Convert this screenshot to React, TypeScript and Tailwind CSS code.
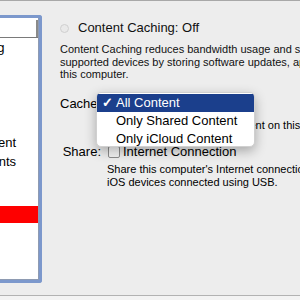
import React from "react";

const rows = [
  "DVD or CD Sharing",
  "Screen Sharing",
  "File Sharing",
  "Printer Sharing",
  "Remote Login",
  "Remote Management",
  "Remote Apple Events",
  "Internet Sharing",
];

export default function App() {
  return (
    <div
      className="relative w-[300px] h-[300px] overflow-hidden bg-[#ededed] text-black"
      style={{ fontFamily: '"Liberation Sans", Arial, sans-serif' }}
    >
      <div className="h-px bg-[#a8a8a8]" />
      <div className="flex h-[294px]">
        {/* Service list */}
        <div className="pt-[14px] shrink-0">
          <div className="w-[42px] h-[268px] border-[3px] border-l-0 border-[#7c98cc] rounded-r-[3px]">
            <div className="h-full border-r border-b border-[#8e9bb2] bg-white overflow-hidden flex flex-col">
              <div className="h-[20px] shrink-0 border-b border-[#7a7a7a] flex justify-end pt-[2px]">
                <div className="w-[2px] h-[17px] bg-[#8a8a8a]" />
              </div>
              {rows.map((r) => (
                <div
                  key={r}
                  className="h-[19px] shrink-0 flex items-center text-[13px] leading-[16px] whitespace-nowrap"
                >
                  <span className="ml-[-109px]">{r}</span>
                </div>
              ))}
              <div className="h-[16px] shrink-0 flex items-center text-[13px] leading-[16px] whitespace-nowrap">
                <span className="ml-[-109px]">Bluetooth Sharing</span>
              </div>
              <div className="h-[17px] shrink-0 bg-[#fe0000]" />
            </div>
          </div>
        </div>

        {/* Detail pane */}
        <div className="ml-[18px] pt-[19px] flex flex-col min-w-0 shrink-0 w-[300px]">
          <div className="h-[16px] flex items-center">
            <div className="w-[9px] h-[9px] rounded-full border border-[#cfcfcf] bg-[#e9e9e9]" />
            <span className="ml-[9px] text-[13px] leading-[16px] text-[#111]">
              Content Caching: Off
            </span>
          </div>
          <div className="mt-[7px] text-[11px] leading-[12.5px] whitespace-nowrap text-[#111]">
            Content Caching reduces bandwidth usage and speeds up installation on
            <br />
            supported devices by storing software updates, apps, and other content on
            <br />
            this computer.
          </div>
          <div className="mt-[13px] h-[20px] flex items-center">
            <span className="w-[41px] text-right text-[13px] leading-[16px]">Cache:</span>
          </div>
          <div className="mt-[5px] ml-[47px] text-[11px] leading-[13px] whitespace-nowrap">
            Store shared and iCloud content on this computer.
          </div>
          <div className="mt-[12px] h-[16px] flex items-center">
            <span className="w-[41px] text-right text-[13px] leading-[16px]">Share:</span>
            <div className="ml-[7px] w-[12px] h-[12px] rounded-[2px] border border-[#8c8c8c] bg-gradient-to-b from-white to-[#f1f1f1]" />
            <span className="ml-[3px] text-[13px] leading-[16px]">Internet Connection</span>
          </div>
          <div className="mt-[3px] ml-[47px] text-[11px] leading-[13px] whitespace-nowrap">
            Share this computer's Internet connection with
            <br />
            iOS devices connected using USB.
          </div>
        </div>
      </div>
      <div className="h-px bg-[#b2b2b2]" />
      <div className="h-[4px] bg-[#f3f3f3]" />

      {/* Open popup menu */}
      <div className="absolute left-[96px] top-[92px] w-[159px] h-[55px] rounded-[5px] bg-white border border-[#d0d0d0] shadow-[0_4px_12px_rgba(0,0,0,0.3)] overflow-hidden pt-px text-[13px] leading-[16px] text-black">
        <div className="h-[18px] bg-[#1b3f8c] text-white flex items-center">
          <span className="w-[19px] text-right pr-[3px] font-bold">✓</span>
          <span>All Content</span>
        </div>
        <div className="h-[18px] flex items-center pl-[19px]">Only Shared Content</div>
        <div className="h-[18px] flex items-center pl-[19px]">Only iCloud Content</div>
      </div>
    </div>
  );
}
